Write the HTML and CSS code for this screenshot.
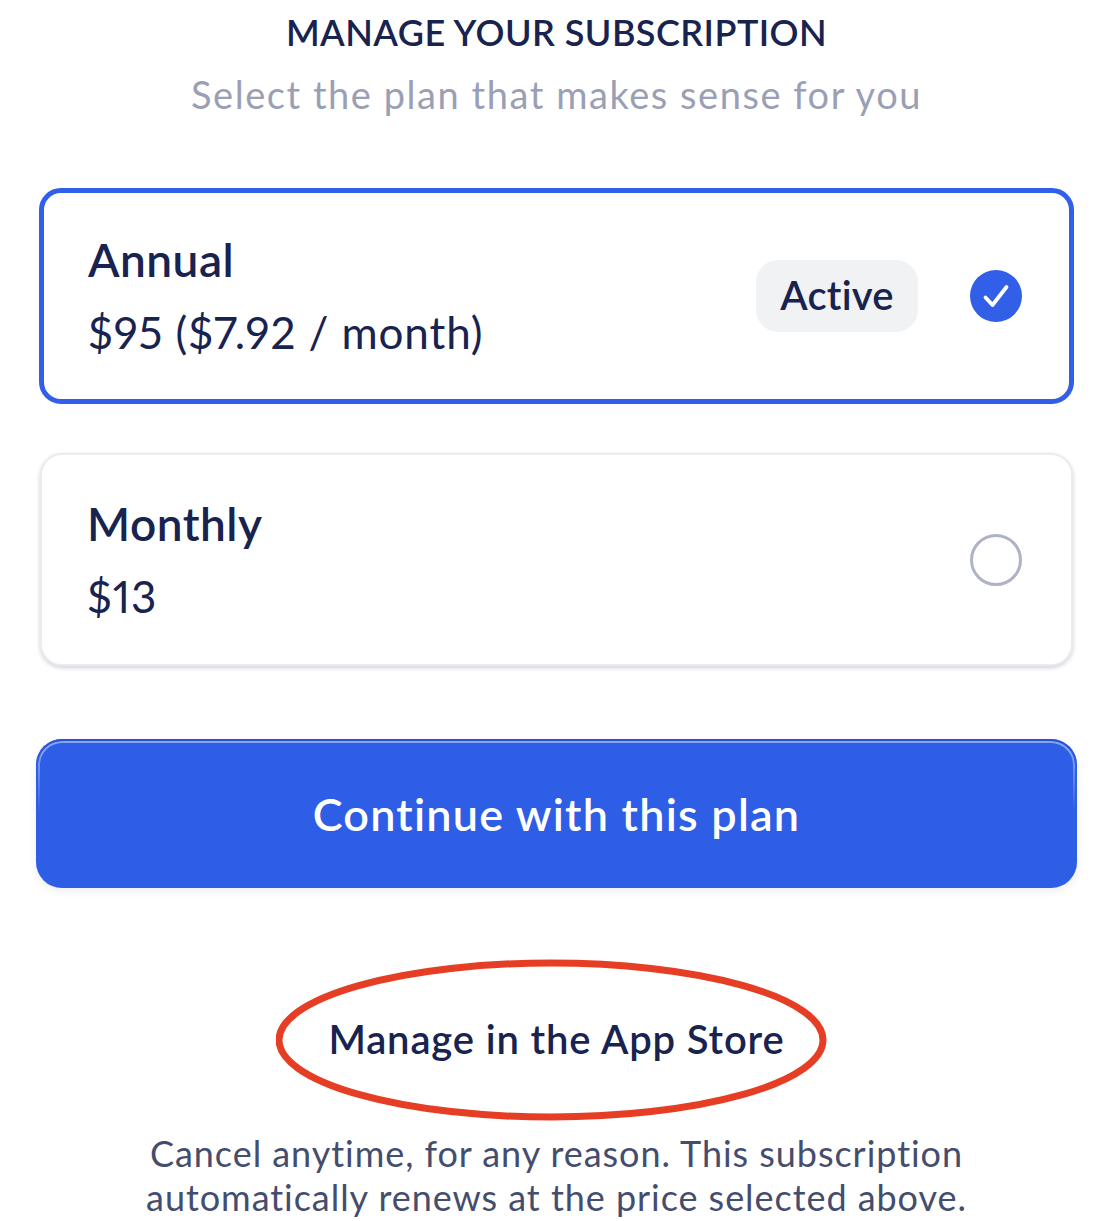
FILE: index.html
```html
<!DOCTYPE html>
<html>
<head>
<meta charset="utf-8">
	<title>Manage your subscription</title>
	<link rel="stylesheet" href="styles.css">
</head>
<body>
<div class="page">
	<h1 class="title">MANAGE YOUR SUBSCRIPTION</h1>
	<p class="subtitle">Select the plan that makes sense for you</p>
	<div class="plan plan-on">
		<div class="plan-text">
			<div class="plan-name">Annual</div>
			<div class="plan-price">$95 ($7.92 / month)</div>
		</div>
		<span class="badge">Active</span>
		<svg class="check" viewBox="0 0 52 52" width="52" height="52">
			<circle cx="26" cy="26" r="26" fill="#315FE8"/>
			<path d="M15.5 27.5l7 7.5 14-18" fill="none" stroke="#fff" stroke-width="3.8" stroke-linecap="round" stroke-linejoin="round"/>
		</svg>
	</div>
	<div class="plan plan-off">
		<div class="plan-text">
			<div class="plan-name">Monthly</div>
			<div class="plan-price">$13</div>
		</div>
		<span class="radio"></span>
	</div>
	<div class="btn">Continue with this plan</div>
	<div class="manage">
		<span class="manage-text">Manage in the App Store</span>
		<svg class="oval" viewBox="0 0 552 162" width="552" height="162">
			<ellipse cx="275" cy="81" rx="272" ry="77" fill="none" stroke="#E63E24" stroke-width="7"/>
		</svg>
	</div>
	<p class="note">Cancel anytime, for any reason. This subscription<br>automatically renews at the price selected above.</p>
</div>
</body>
</html>
```

FILE: styles.css
```css
*{
	margin: 0;
	padding: 0;
	box-sizing: border-box;
}
html,body{
	width: 100%;
	background: #fff;
}
body{
	font-family: "Lato", "Liberation Sans", sans-serif;
	color: #18234f;
	font-variant-numeric: proportional-nums;
}
.page{
	height: 1221px;
	overflow: hidden;
	padding: 11px 27px 0 36px;
}
.title{
	font-size: 36px;
	line-height: 43px;
	font-weight: 600;
	letter-spacing: 0.45px;
	text-align: center;
}
.subtitle{
	margin-top: 17px;
	font-size: 38px;
	line-height: 46px;
	letter-spacing: 1.55px;
	text-align: center;
	color: #9a9fb6;
}
.plan{
	display: flex;
	align-items: center;
	height: 216px;
	margin: 0 3px;
	background: #fff;
	border-radius: 22px;
}
.plan-on{
	margin-top: 71px;
	border: 5px solid #315FE8;
	padding-left: 44px;
	padding-right: 47px;
}
.plan-off{
	margin: 49px 4px 0;
	height: 213px;
	border: 2px solid #ececef;
	box-shadow: 0 2px 4px rgba(24,35,79,0.2);
	padding-left: 45px;
	padding-right: 49px;
}
.plan-text{
	flex: 1;
}
.plan-name{
	font-size: 46px;
	line-height: 56px;
	font-weight: 600;
	letter-spacing: 0.5px;
}
.plan-price{
	margin-top: 16px;
	font-size: 44px;
	line-height: 56px;
	letter-spacing: 0.9px;
}
.badge{
	width: 162px;
	height: 72px;
	margin-right: 52px;
	border-radius: 22px;
	background: #f1f2f4;
	font-size: 40px;
	line-height: 70px;
	font-weight: 600;
	letter-spacing: 0.2px;
	text-align: center;
}
.check{
	display: block;
}
.radio{
	width: 52px;
	height: 52px;
	border: 3.5px solid #b0b3c7;
	border-radius: 50%;
}
.btn{
	position: relative;
	margin-top: 73px;
	height: 149px;
	border-radius: 26px;
	background: #2E5DE6;
	box-shadow: inset 0 2px 0 #2a55d2, 0 3px 8px rgba(24,35,79,0.08);
	color: #fff;
	font-size: 45px;
	line-height: 151px;
	font-weight: 600;
	letter-spacing: 1.2px;
	text-align: center;
}
.btn::before{
	content: "";
	position: absolute;
	top: 2px;
	left: 2px;
	right: 2px;
	height: 70px;
	border: 2px solid #86a4f3;
	border-bottom: none;
	border-radius: 24px 24px 0 0;
	-webkit-mask-image: linear-gradient(#000 15%, transparent);
	mask-image: linear-gradient(#000 15%, transparent);
}
.manage{
	position: relative;
	margin-top: 71px;
	height: 162px;
	text-align: center;
}
.manage-text{
	display: block;
	font-size: 40px;
	line-height: 160px;
	font-weight: 600;
	letter-spacing: 0.85px;
}
.oval{
	position: absolute;
	left: 240px;
	top: 0;
}
.note{
	margin-top: 10px;
	font-size: 36px;
	line-height: 44px;
	letter-spacing: 0.95px;
	text-align: center;
	color: #454d6e;
}
```
